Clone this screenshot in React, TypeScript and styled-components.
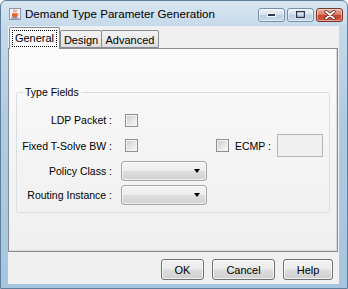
import styled, { createGlobalStyle } from "styled-components";

const GlobalStyle = createGlobalStyle`
  html, body {
    margin: 0;
    padding: 0;
    background: #ffffff;
  }
  * {
    box-sizing: border-box;
  }
`;

const Window = styled.div`
  width: 348px;
  height: 289px;
  display: flex;
  flex-direction: column;
  border: 1px solid #5f7f9c;
  border-radius: 6px 6px 0 0;
  background: linear-gradient(to bottom, #d9e6f1 0px, #c5d9ea 26px, #aecbe3 120px, #a6c5df 100%);
  font-family: "Liberation Sans", Arial, sans-serif;
  font-size: 10.5px;
  color: #000;
  overflow: hidden;
`;

const TitleBar = styled.div`
  height: 25px;
  display: flex;
  align-items: center;
  padding: 0 4px 0 8px;
`;

const TitleText = styled.span`
  margin-left: 4px;
  font-size: 11.6px;
  color: #000;
  flex: 1;
  white-space: nowrap;
`;

const CaptionButtons = styled.div`
  display: flex;
  gap: 2px;
  margin-top: 2px;
`;

const CaptionButton = styled.div<{ $close?: boolean }>`
  width: 27px;
  height: 14px;
  display: flex;
  align-items: center;
  justify-content: center;
  border-radius: 3px;
  border: 1px solid ${(p) => (p.$close ? "#7b3325" : "#7490ad")};
  background: ${(p) =>
    p.$close
      ? "linear-gradient(to bottom, #e9b0a2 0%, #d98069 45%, #c4452f 52%, #d05a40 100%)"
      : "linear-gradient(to bottom, #eef3f8 0%, #d6e2ee 45%, #bccfe2 52%, #c9dbec 100%)"};
  box-shadow: inset 0 0 0 1px rgba(255, 255, 255, 0.45);
`;

const Client = styled.div`
  flex: 1;
  margin: 0 8px 4px 7px;
  background: #f0f0f0;
  display: flex;
  flex-direction: column;
`;

const TabStrip = styled.div`
  height: 22px;
  display: flex;
  align-items: flex-end;
  padding: 1px 0 0 1px;
`;

const Tab = styled.div<{ $active?: boolean; $w: number; $overlap?: boolean }>`
  position: relative;
  z-index: ${(p) => (p.$active ? 2 : 1)};
  width: ${(p) => p.$w}px;
  height: ${(p) => (p.$active ? 22 : 18)}px;
  margin-left: ${(p) => (p.$overlap ? -1 : 0)}px;
  margin-bottom: ${(p) => (p.$active ? -1 : 0)}px;
  border: 1px solid #898c95;
  border-bottom: ${(p) => (p.$active ? "none" : "1px solid #898c95")};
  border-radius: 2px 2px 0 0;
  background: ${(p) =>
    p.$active ? "#fbfbfb" : "linear-gradient(to bottom, #f3f3f3 0%, #ebebeb 50%, #dddddd 100%)"};
  display: flex;
  align-items: center;
  justify-content: center;
  padding-top: ${(p) => (p.$active ? 0 : 1)}px;
  font-size: 11px;
`;

const FocusRing = styled.span`
  border: 1px dotted #000;
  padding: 1px 2px 2px;
  line-height: 12px;
`;

const Panel = styled.div`
  height: 204px;
  margin-right: 1px;
  border: 1px solid #898c95;
  box-shadow: inset -1px -1px 0 #d7d9dc;
  background: linear-gradient(to bottom, #fbfbfb 0%, #f3f3f3 60%, #f0f0f0 100%);
  padding: 37px 7px 0 7px;
`;

const GroupBox = styled.fieldset`
  margin: 0;
  min-width: 0;
  padding: 11px 0 7px 0;
  border: 1px solid #d5dfe5;
  border-radius: 3px;
`;

const GroupTitle = styled.legend`
  margin-left: 6px;
  padding: 0 2px;
  line-height: 13px;
  font-size: 10.5px;
`;

const FormGrid = styled.div`
  display: grid;
  grid-template-columns: 95px 86px 1fr;
  grid-template-rows: 20px 23px 20px 20px;
  column-gap: 9px;
  row-gap: 4px;
  align-items: center;
`;

const Label = styled.div`
  grid-column: 1;
  text-align: right;
  white-space: nowrap;
`;

const Check = styled.div<{ $inset?: number }>`
  width: 13px;
  height: 13px;
  margin-left: ${(p) => p.$inset ?? 0}px;
  border: 1px solid #8e8f8f;
  background: linear-gradient(135deg, #cbcbcb 0%, #e6e6e6 55%, #fafafa 100%);
  box-shadow: inset 0 0 0 1px #f3f3f3;
`;

const Extra = styled.div`
  display: flex;
  align-items: center;
  height: 23px;
`;

const ExtraLabel = styled.span`
  margin-left: 6px;
  white-space: nowrap;
`;

const TextBox = styled.div`
  width: 46px;
  height: 23px;
  margin-left: 6px;
  border: 1px solid #b4b4b4;
  background: #f0f0f0;
`;

const Combo = styled.div`
  width: 86px;
  height: 20px;
  border: 1px solid #a5a5a5;
  border-radius: 3px;
  background: linear-gradient(to bottom, #f6f6f6 0%, #ececec 48%, #dedede 52%, #d2d2d2 100%);
  box-shadow: inset 0 0 0 1px rgba(255, 255, 255, 0.6);
  display: flex;
  align-items: center;
  justify-content: flex-end;
  padding-right: 6px;
`;

const Arrow = styled.span`
  width: 0;
  height: 0;
  border-left: 3.5px solid transparent;
  border-right: 3.5px solid transparent;
  border-top: 4px solid #000;
`;

const ButtonBar = styled.div`
  flex: 1;
  display: flex;
  justify-content: flex-end;
  align-items: flex-start;
  gap: 8px;
  padding: 7px 6px 0 0;
`;

const Button = styled.div<{ $w: number }>`
  width: ${(p) => p.$w}px;
  height: 21px;
  border: 1px solid #707070;
  border-radius: 3px;
  background: linear-gradient(to bottom, #f2f2f2 0%, #ebebeb 48%, #dddddd 52%, #cfcfcf 100%);
  box-shadow: inset 0 0 0 1px rgba(255, 255, 255, 0.7);
  display: flex;
  align-items: center;
  justify-content: center;
  font-size: 11px;
`;

const AppIcon = () => (
  <svg width="12" height="12" viewBox="0 0 12 12">
    <rect x="0.5" y="0.5" width="11" height="11" fill="#f3f5f8" stroke="#8a96a3" />
    <path d="M5 1.5c1 1-1 1.6 0 2.8M7 1.8c.8.9-.8 1.4 0 2.4" stroke="#d2401c" strokeWidth="0.9" fill="none" />
    <path d="M3 5.2h5.4v2.6c0 1.1-1 1.8-2.7 1.8S3 8.9 3 7.8z" fill="#e5622c" />
    <path d="M8.4 5.8c1.3 0 1.3 1.7 0 1.7" stroke="#e5622c" strokeWidth="0.8" fill="none" />
    <path d="M2.2 10h7.4" stroke="#3f69a8" strokeWidth="1" />
  </svg>
);

const MinGlyph = () => (
  <svg width="11" height="6" viewBox="0 0 11 6">
    <rect x="1.5" y="1.5" width="8" height="3" fill="#2b3a4a" stroke="#f4f8fb" strokeWidth="1" />
  </svg>
);

const MaxGlyph = () => (
  <svg width="11" height="9" viewBox="0 0 11 9">
    <rect x="1.5" y="1.5" width="8" height="6" fill="none" stroke="#2b3a4a" strokeWidth="1.4" />
    <rect x="0.5" y="0.5" width="10" height="8" fill="none" stroke="#f4f8fb" strokeWidth="0.6" />
  </svg>
);

const CloseGlyph = () => (
  <svg width="12" height="10" viewBox="0 0 12 10">
    <path d="M2 1.5l8 7M10 1.5l-8 7" stroke="#5a1e14" strokeWidth="3.2" strokeLinecap="round" />
    <path d="M2 1.5l8 7M10 1.5l-8 7" stroke="#ffffff" strokeWidth="1.8" strokeLinecap="round" />
  </svg>
);

const App = () => {
  return (
    <>
      <GlobalStyle />
      <Window>
        <TitleBar>
          <AppIcon />
          <TitleText>Demand Type Parameter Generation</TitleText>
          <CaptionButtons>
            <CaptionButton>
              <MinGlyph />
            </CaptionButton>
            <CaptionButton>
              <MaxGlyph />
            </CaptionButton>
            <CaptionButton $close>
              <CloseGlyph />
            </CaptionButton>
          </CaptionButtons>
        </TitleBar>

        <Client>
          <TabStrip>
            <Tab $active $w={51}>
              <FocusRing>General</FocusRing>
            </Tab>
            <Tab $w={42}>Design</Tab>
            <Tab $w={58} $overlap>
              Advanced
            </Tab>
          </TabStrip>

          <Panel>
            <GroupBox>
              <GroupTitle>Type Fields</GroupTitle>
              <FormGrid>
                <Label>LDP Packet :</Label>
                <Check $inset={4} />
                <div />

                <Label>Fixed T-Solve BW :</Label>
                <Check $inset={4} />
                <Extra>
                  <Check />
                  <ExtraLabel>ECMP :</ExtraLabel>
                  <TextBox />
                </Extra>

                <Label>Policy Class :</Label>
                <Combo>
                  <Arrow />
                </Combo>
                <div />

                <Label>Routing Instance :</Label>
                <Combo>
                  <Arrow />
                </Combo>
                <div />
              </FormGrid>
            </GroupBox>
          </Panel>

          <ButtonBar>
            <Button $w={43}>OK</Button>
            <Button $w={63}>Cancel</Button>
            <Button $w={50}>Help</Button>
          </ButtonBar>
        </Client>
      </Window>
    </>
  );
};

export default App;
